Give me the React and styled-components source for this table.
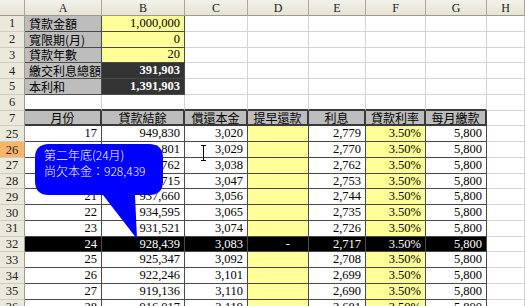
import styled, { createGlobalStyle } from 'styled-components';

const GlobalStyle = createGlobalStyle`
  html, body {
    margin: 0;
    padding: 0;
    background: #fff;
    overflow: hidden;
  }
`;

const LIGHT = '1px solid #d4d4d4';
const DARK = '1px solid #4a4a4a';
const THICK = '2px solid #3a3a3a';

const GRAY = '#bdbdbd';
const YELLOW = '#ffff99';

const SERIF = '"Liberation Serif", "Times New Roman", "DejaVu Serif", "Noto Sans CJK TC", serif';

const Sheet = styled.div`
  position: relative;
  display: grid;
  grid-template-columns: 25px 77px 83px 63px 61px 57px 60px 61px 38px;
  grid-template-rows: 16px;
  grid-auto-rows: 15.78px;
  width: 525px;
  font-family: ${SERIF};
  font-size: 12px;
  color: #000;
`;

const ColHead = styled.div`
  box-sizing: border-box;
  display: flex;
  align-items: center;
  justify-content: center;
  background: linear-gradient(#f3f2ea, #e6e3d4);
  border-right: 1px solid #aca899;
  border-bottom: 1px solid #9d9a8c;
  font-family: ${SERIF};
  font-size: 12px;
  line-height: 14px;
  color: #222;
`;

const RowHead = styled.div`
  box-sizing: border-box;
  display: flex;
  align-items: center;
  justify-content: center;
  background: ${(p) => (p.$active ? '#f6b56a' : '#ebe9dc')};
  border-right: 1px solid #9d9a8c;
  border-bottom: 1px solid #cfccbe;
  font-family: ${SERIF};
  font-size: 12.5px;
  line-height: 14px;
  color: #222;
`;

const Cell = styled.div`
  box-sizing: border-box;
  display: flex;
  align-items: center;
  justify-content: ${(p) =>
    p.$align === 'left' ? 'flex-start' : p.$align === 'center' ? 'center' : 'flex-end'};
  padding: 0 ${(p) => p.$pad || 4}px 0 4px;
  background: ${(p) => p.$bg || '#fff'};
  color: ${(p) => p.$color || '#000'};
  font-weight: ${(p) => (p.$bold ? 700 : 400)};
  font-family: ${(p) =>
    p.$cjk ? '"Noto Sans CJK TC", "Liberation Sans", sans-serif' : SERIF};
  font-size: ${(p) => (p.$cjk ? '12px' : '12.5px')};
  line-height: 13px;
  border-right: ${(p) => p.$rb || LIGHT};
  border-bottom: ${(p) => p.$bb || LIGHT};
  white-space: nowrap;
  min-width: 0;
`;

const Callout = styled.div`
  position: absolute;
  left: 35px;
  top: 144px;
  width: 130px;
  height: 97px;
`;

const CalloutText = styled.div`
  position: absolute;
  left: 9px;
  top: 3px;
  font-family: "Noto Sans CJK TC", "Liberation Sans", sans-serif;
  font-size: 12px;
  font-weight: 300;
  line-height: 16px;
  color: #fff;
  white-space: nowrap;
`;

const Cursor = styled.svg`
  position: absolute;
  left: 200px;
  top: 145px;
`;

const cols = ['A', 'B', 'C', 'D', 'E', 'F', 'G', 'H'];

const topRows = [
  { label: '貸款金額', value: '1,000,000', bg: YELLOW },
  { label: '寬限期(月)', value: '0', bg: YELLOW },
  { label: '貸款年數', value: '20', bg: YELLOW },
  { label: '繳交利息總額', value: '391,903', bg: '#333', dark: true },
  { label: '本利和', value: '1,391,903', bg: '#333', dark: true },
];

const headers = ['月份', '貸款結餘', '償還本金', '提早還款', '利息', '貸款利率', '每月繳款'];

const dataRows = [
  [25, 17, '949,830', '3,020', '2,779'],
  [26, 18, '946,801', '3,029', '2,770'],
  [27, 19, '943,762', '3,038', '2,762'],
  [28, 20, '940,715', '3,047', '2,753'],
  [29, 21, '937,660', '3,056', '2,744'],
  [30, 22, '934,595', '3,065', '2,735'],
  [31, 23, '931,521', '3,074', '2,726'],
  [32, 24, '928,439', '3,083', '2,717'],
  [33, 25, '925,347', '3,092', '2,708'],
  [34, 26, '922,246', '3,101', '2,699'],
  [35, 27, '919,136', '3,110', '2,690'],
  [36, 28, '916,017', '3,119', '2,681'],
];

function Blank({ n }) {
  return Array.from({ length: n }, (_, i) => <Cell key={i} />);
}

function Frag({ children }) {
  return <>{children}</>;
}

export default function App() {
  return (
    <>
      <GlobalStyle />
      <Sheet>
        <ColHead />
        {cols.map((c) => (
          <ColHead key={c}>{c}</ColHead>
        ))}

        {topRows.map((r, i) => (
          <Frag key={r.label}>
            <RowHead>{i + 1}</RowHead>
            <Cell $bg={GRAY} $align="left" $cjk $rb={DARK} $bb={DARK}>
              {r.label}
            </Cell>
            <Cell
              $bg={r.bg}
              $color={r.dark ? '#fff' : '#000'}
              $bold={r.dark}
              $rb={DARK}
              $bb={DARK}
            >
              {r.value}
            </Cell>
            <Blank n={6} />
          </Frag>
        ))}

        <RowHead>6</RowHead>
        {headers.map((h) => (
          <Cell key={h} $bb={THICK} />
        ))}
        <Cell />

        <RowHead>7</RowHead>
        {headers.map((h) => (
          <Cell key={h} $bg={GRAY} $align="center" $cjk $rb={THICK} $bb={THICK}>
            {h}
          </Cell>
        ))}
        <Cell />

        {dataRows.map(([row, month, balance, principal, interest]) => {
          const hl = row === 32;
          const fill = (yellow) => (hl ? '#000' : yellow ? YELLOW : '#fff');
          const color = hl ? '#fff' : '#000';
          return (
            <Frag key={row}>
              <RowHead $active={row === 26}>{row}</RowHead>
              <Cell $bg={fill()} $color={color} $rb={DARK} $bb={DARK}>{month}</Cell>
              <Cell $bg={fill()} $color={color} $rb={DARK} $bb={DARK}>{balance}</Cell>
              <Cell $bg={fill()} $color={color} $rb={DARK} $bb={DARK}>{principal}</Cell>
              <Cell $bg={fill(true)} $color={color} $rb={DARK} $bb={DARK} $pad={18}>
                {hl ? '-' : ''}
              </Cell>
              <Cell $bg={fill()} $color={color} $rb={DARK} $bb={DARK}>{interest}</Cell>
              <Cell $bg={fill(true)} $color={color} $rb={DARK} $bb={DARK}>3.50%</Cell>
              <Cell $bg={fill()} $color={color} $rb={DARK} $bb={DARK}>5,800</Cell>
              <Cell />
            </Frag>
          );
        })}

        <Callout>
          <svg width="130" height="97" viewBox="0 0 130 97">
            <path
              d="M14,0 H114 Q128,0 128,14 V37 Q128,51 114,51 H100 L102,95 L68,51 H14 Q0,51 0,37 V14 Q0,0 14,0 Z"
              fill="#0000ff"
            />
          </svg>
          <CalloutText>
            第二年底(24月)
            <br />
            尚欠本金：928,439
          </CalloutText>
        </Callout>

        <Cursor width="7" height="16" viewBox="0 0 7 16">
          <path d="M1,0.5 H6 M3.5,0.5 V15.5 M1,15.5 H6" stroke="#000" strokeWidth="1" fill="none" />
        </Cursor>
      </Sheet>
    </>
  );
}
